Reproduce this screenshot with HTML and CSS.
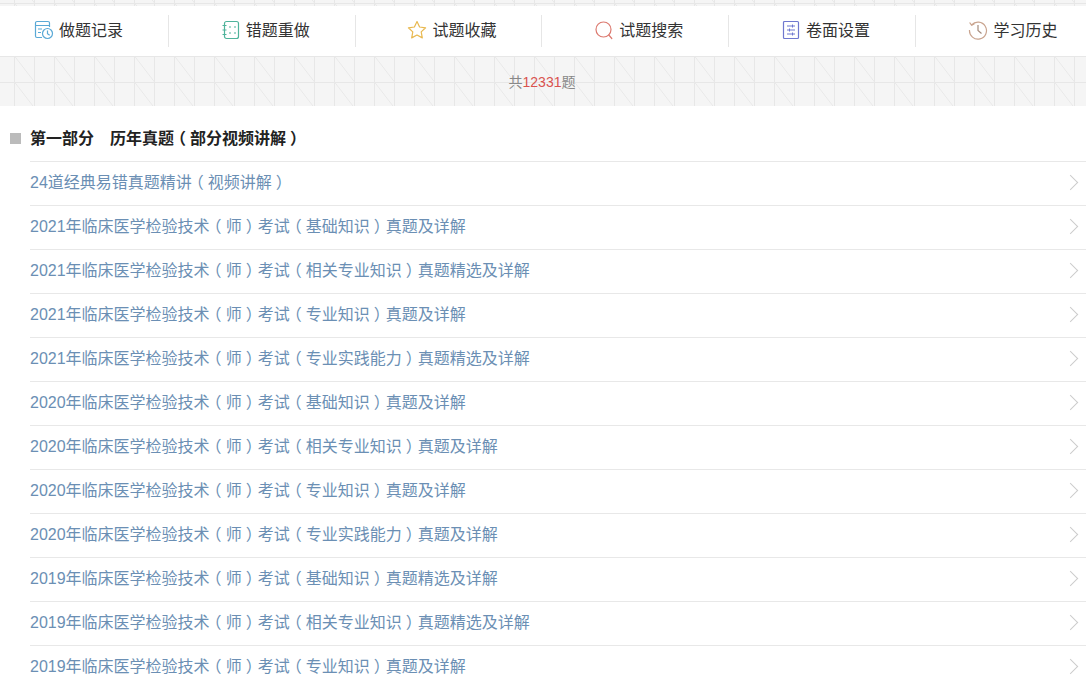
FILE: index.html
```html
<!DOCTYPE html>
<html lang="zh-CN">
<head>
    <meta charset="UTF-8">
    <meta name="viewport" content="width=device-width, initial-scale=1.0">
    <title>章节练习</title>
    <link rel="stylesheet" href="styles.css">
</head>
<body>
    <div class="top-strip"></div>
    <div class="nav">
        <a class="nav-item">
            <svg class="icon" viewBox="0 0 20 20" fill="none" stroke="#5aa9d6" stroke-width="1.2"><path d="M8 17.5H3a1.5 1.5 0 0 1-1.5-1.5V3A1.5 1.5 0 0 1 3 1.5h11A1.5 1.5 0 0 1 15.500 3v4"/><path d="M1.500 5.500h14M4 9h4M4 12.500h3"/><circle cx="13.500" cy="13.500" r="5"/><path d="M13.500 10.500v3.200l2.200 1.600"/></svg>
            <span>做题记录</span>
        </a>
        <a class="nav-item">
            <svg class="icon" viewBox="0 0 20 20" fill="none" stroke="#4fb39b" stroke-width="1.2"><rect x="3.500" y="1.500" width="14" height="17" rx="2"/><path d="M1.500 5.500h4M1.500 10h4M1.500 14.500h4M8 7h2M13 7h2M8 13h2M13 13h2"/></svg>
            <span>错题重做</span>
        </a>
        <a class="nav-item">
            <svg class="icon" viewBox="0 0 20 20" fill="none" stroke="#e8b84f" stroke-width="1.200"><path d="M10 1.500l2.600 5.500 6 .8-4.400 4.100 1.100 6L10 15l-5.300 2.900 1.100-6L1.400 7.800l6-.8z" stroke-linejoin="round"/></svg>
            <span>试题收藏</span>
        </a>
        <a class="nav-item">
            <svg class="icon" viewBox="0 0 20 20" fill="none" stroke="#dc7a70" stroke-width="1.200"><circle cx="9.500" cy="9.500" r="7.500"/><path d="M14.800 15l3 3.500" stroke-linecap="round"/></svg>
            <span>试题搜索</span>
        </a>
        <a class="nav-item">
            <svg class="icon" viewBox="0 0 20 20" fill="none" stroke="#6f78cf" stroke-width="1.200"><rect x="2.500" y="1.500" width="15" height="17" rx="1"/><path d="M6 6h8M6 10h8M6 14h8"/><path d="M11.500 4.500v3M8.500 8.500v3M11.500 12.500v3" stroke-width="1"/></svg>
            <span>卷面设置</span>
        </a>
        <a class="nav-item">
            <svg class="icon" viewBox="0 0 20 20" fill="none" stroke="#c9a48f" stroke-width="1.200"><path d="M3.600 5A8.500 8.500 0 1 1 1.500 10"/><path d="M1.600 2.500l2 2.700 2.900-1.500"/><path d="M10 5v5.500l3.500 3" stroke="#a58c7d"/></svg>
            <span>学习历史</span>
        </a>
    </div>
    <div class="banner">共<em>12331</em>题</div>

    <h3 class="part-title"><span>第一部分　历年真题<i class="br">（</i>部分视频讲解<i class="br">）</i></span></h3>
    <ul class="chapter-list">
        <li>24道经典易错真题精讲<i class="br">（</i>视频讲解<i class="br">）</i></li>
        <li>2021年临床医学检验技术<i class="br">（</i>师<i class="br">）</i>考试<i class="br">（</i>基础知识<i class="br">）</i>真题及详解</li>
        <li>2021年临床医学检验技术<i class="br">（</i>师<i class="br">）</i>考试<i class="br">（</i>相关专业知识<i class="br">）</i>真题精选及详解</li>
        <li>2021年临床医学检验技术<i class="br">（</i>师<i class="br">）</i>考试<i class="br">（</i>专业知识<i class="br">）</i>真题及详解</li>
        <li>2021年临床医学检验技术<i class="br">（</i>师<i class="br">）</i>考试<i class="br">（</i>专业实践能力<i class="br">）</i>真题精选及详解</li>
        <li>2020年临床医学检验技术<i class="br">（</i>师<i class="br">）</i>考试<i class="br">（</i>基础知识<i class="br">）</i>真题及详解</li>
        <li>2020年临床医学检验技术<i class="br">（</i>师<i class="br">）</i>考试<i class="br">（</i>相关专业知识<i class="br">）</i>真题及详解</li>
        <li>2020年临床医学检验技术<i class="br">（</i>师<i class="br">）</i>考试<i class="br">（</i>专业知识<i class="br">）</i>真题及详解</li>
        <li>2020年临床医学检验技术<i class="br">（</i>师<i class="br">）</i>考试<i class="br">（</i>专业实践能力<i class="br">）</i>真题及详解</li>
        <li>2019年临床医学检验技术<i class="br">（</i>师<i class="br">）</i>考试<i class="br">（</i>基础知识<i class="br">）</i>真题精选及详解</li>
        <li>2019年临床医学检验技术<i class="br">（</i>师<i class="br">）</i>考试<i class="br">（</i>相关专业知识<i class="br">）</i>真题精选及详解</li>
        <li>2019年临床医学检验技术<i class="br">（</i>师<i class="br">）</i>考试<i class="br">（</i>专业知识<i class="br">）</i>真题及详解</li>
    </ul>
</body>
</html>
```

FILE: styles.css
```css
html, body { height: 100%; overflow: hidden; }
body { margin: 0; background: #fff; font-family: "Liberation Sans", "Noto Sans CJK SC", sans-serif; font-size: 16px; color: #333; }

.top-strip, .banner { background-color: #f5f5f5; background-image: url("data:image/svg+xml,%3Csvg xmlns='http://www.w3.org/2000/svg' width='40' height='26'%3E%3Cg stroke='%23e7e7e7' stroke-width='1' fill='none'%3E%3Cpath d='M14.500 0v26M34.500 0v26M0 .5h40'/%3E%3Cpath d='M14.500 0l20 26' stroke='%23e9e9e9'/%3E%3C/g%3E%3C/svg%3E"); }
.top-strip { height: 6px; background-position: 0 -23px; }

.nav { display: grid; grid-template-columns: repeat(6, 186.800px); height: 50px; margin-left: -18px; background: #fff; align-items: center; }
.nav-item { display: flex; align-items: center; justify-content: center; gap: 5px; height: 32px; box-sizing: border-box; padding: 0 0 4px 7px; border-right: 1px solid #e6e6e6; color: #333; cursor: pointer; }
.nav-item:last-child { border-right: none; }
.icon { width: 20px; height: 20px; flex: none; margin-top: 2px; }

.banner { height: 50px; padding-right: 2px; background-position: 0 0; text-align: center; font-size: 14px; line-height: 52px; color: #888; }
.banner em { font-style: normal; color: #d9534f; }

/* half-width bracket glyph centred in a 1em cell */
.br { font-style: normal; font-feature-settings: "halt"; padding: 0 4px; }

.part-title { display: flex; align-items: center; height: 55px; margin: 0; padding: 7px 0 0 30px; box-sizing: border-box; position: relative; font-size: 16px; font-weight: bold; color: #222; }
.part-title::before { content: ""; position: absolute; left: 10px; top: 27px; width: 11px; height: 11px; background: #bbb; }

.chapter-list { list-style: none; margin: 0 0 0 30px; padding: 0; }
.chapter-list li { position: relative; height: 42px; padding-top: 1px; line-height: 40px; border-top: 1px solid #e8e8e8; color: #6b8fb4; cursor: pointer; }
.chapter-list li::after { content: ""; position: absolute; right: 10px; top: 15px; width: 10px; height: 10px; border-top: 1px solid #ccc; border-right: 1px solid #ccc; transform: rotate(45deg); }
```
